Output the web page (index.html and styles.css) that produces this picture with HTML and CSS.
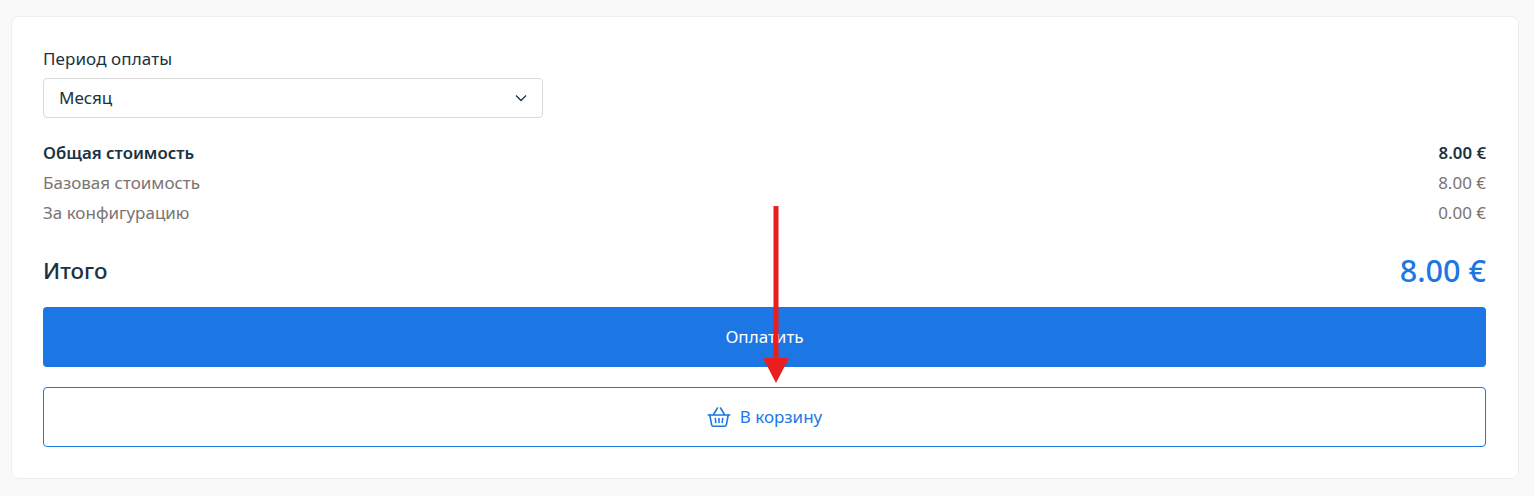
FILE: index.html
```html
<!DOCTYPE html>
<html lang="ru">
<head>
  <meta charset="UTF-8" />
  <title>Оплата</title>
  <link rel="stylesheet" href="styles.css">
</head>
<body>
  <div class="card">
    <label class="field-label">Период оплаты</label>
    <div class="select">
      <span>Месяц</span>
      <svg class="chevron" width="12" height="8" viewBox="0 0 12 8">
        <path d="M1 1.5l5 5 5-5" fill="none" stroke="#1b3240" stroke-width="1.3"/>
      </svg>
    </div>

    <div class="prices">
      <div class="row row-bold"><span>Общая стоимость</span><span>8.00 €</span></div>
      <div class="row"><span>Базовая стоимость</span><span>8.00 €</span></div>
      <div class="row"><span>За конфигурацию</span><span>0.00 €</span></div>
    </div>

    <div class="total">
      <span>Итого</span>
      <span class="total-sum">8.00 €</span>
    </div>

    <button class="btn btn-primary">Оплатить</button>
    <button class="btn btn-outline">
      <svg class="basket" width="24" height="22" viewBox="0 0 24 22" fill="none" stroke="#1c77e5" stroke-width="1.6" stroke-linecap="round" stroke-linejoin="round">
        <path d="M1.2 9h21.6"/>
        <path d="M2.8 9l1.8 9.6c.2.9.8 1.6 1.7 1.6h11.4c.9 0 1.5-.7 1.7-1.6L21.2 9"/>
        <path d="M6.5 8.5L10.5 2M17.5 8.5L13.5 2"/>
        <path d="M8.3 12.5l.5 4M12 12.5v4M15.7 12.5l-.5 4"/>
      </svg>
      <span>В корзину</span>
    </button>
  </div>

  <!-- стрелка поверх скриншота -->
  <svg class="arrow" width="28" height="178" viewBox="0 0 28 178">
    <rect x="11.5" y="0" width="5" height="154" fill="#e91e1e"/>
    <path d="M1 152h26L14 177z" fill="#e91e1e"/>
  </svg>
</body>
</html>
```

FILE: styles.css
```css
body {
  margin: 0;
  padding: 16px 15px 0 11px;
  background-color: #f9f9f9;
  font-family: "Noto Sans", sans-serif;
  color: #1b3240;
  font-size: 17px;
}
.card {
  box-sizing: border-box;
  height: 463px;
  padding: 31px 32px 0 31px;
  background-color: #fff;
  border: 1px solid #eeeeee;
  border-radius: 8px;
}
.field-label {
  display: block;
  height: 30px;
  line-height: 22px;
  letter-spacing: 0.1px;
}
.select {
  box-sizing: border-box;
  display: flex;
  justify-content: space-between;
  align-items: center;
  width: 500px;
  height: 40px;
  padding: 0 15px 2px;
  border: 1px solid #d9d9d9;
  border-radius: 4px;
}
.chevron {
  margin-top: 2px;
}
.prices {
  margin-top: 20px;
}
.row {
  display: flex;
  justify-content: space-between;
  height: 30px;
  line-height: 30px;
  color: #7a7472;
}
.row-bold {
  font-weight: 600;
  font-size: 16.8px;
  color: #1b3240;
}
.total {
  display: flex;
  justify-content: space-between;
  align-items: center;
  height: 32px;
  margin-top: 26px;
  font-size: 22.4px;
  font-weight: 500;
}
.total-sum {
  font-size: 30.6px;
  font-weight: 500;
  color: #1c77e5;
}
.btn {
  display: flex;
  justify-content: center;
  align-items: center;
  gap: 9px;
  width: 100%;
  height: 60px;
  padding-bottom: 2px;
  border-radius: 4px;
  font: inherit;
}
.btn-primary {
  margin-top: 21px;
  background-color: #1c77e5;
  border: 0;
  color: #fff;
}
.btn-outline {
  margin-top: 20px;
  background-color: #fff;
  border: 1px solid #1c77e5;
  color: #1c77e5;
}
.arrow {
  position: absolute;
  left: 762px;
  top: 206px;
}
```
